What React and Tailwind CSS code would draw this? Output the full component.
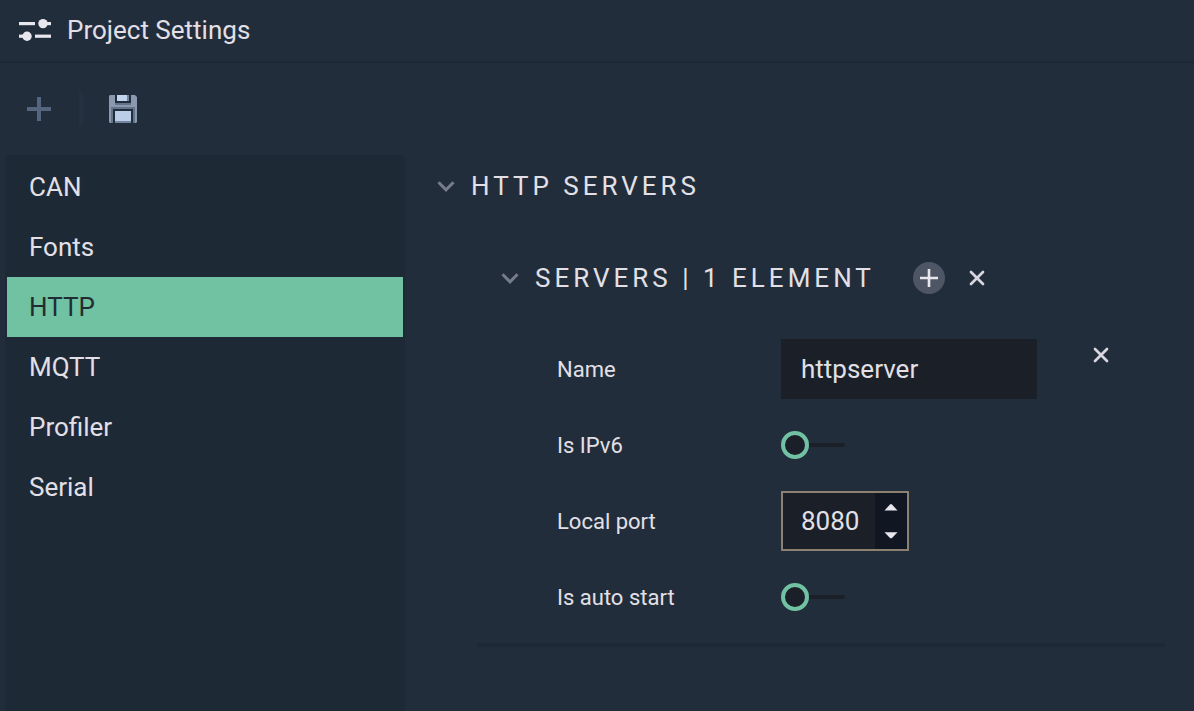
import { useState } from "react";

const SECTIONS = ["CAN", "Fonts", "HTTP", "MQTT", "Profiler", "Serial"];

function SlidersIcon() {
  return (
    <svg width="32" height="24" viewBox="0 0 32 24" fill="#e9e7ee" aria-hidden="true">
      <rect x="0" y="4" width="16" height="3.2" />
      <rect x="26" y="4" width="6" height="3.2" />
      <circle cx="24" cy="5.6" r="4.7" />
      <rect x="0" y="16.6" width="6" height="3.2" />
      <rect x="16" y="16.6" width="16" height="3.2" />
      <circle cx="8" cy="18.2" r="4.7" />
    </svg>
  );
}

function PlusIcon() {
  return (
    <svg width="24" height="24" viewBox="0 0 24 24" fill="#56657f" aria-hidden="true">
      <path d="M10 0h4v10h10v4H14v10h-4V14H0v-4h10z" />
    </svg>
  );
}

function SaveIcon() {
  return (
    <svg width="28" height="28" viewBox="0 0 28 28" aria-hidden="true">
      <path d="M1 0h25l2 2v25l-1 1H1l-1-1V1z" fill="#8b99ae" />
      <path d="M6 0h16v8H6z" fill="#222d3c" />
      <path d="M6 8h16v2H6z" fill="#65738a" />
      <path d="M8 0h10v6H8z" fill="#c3d4ee" />
      <path d="M18 0h2v6h-2z" fill="#7485a0" />
      <path d="M2 12h24v2H2zM2 14h2v14H2zM24 14h2v14h-2z" fill="#65738a" />
      <path d="M4 14h20v14H4z" fill="#222d3c" />
      <path d="M6 16h16v10H6z" fill="#bccde8" />
      <path d="M6 26h16v2H6z" fill="#7485a0" />
    </svg>
  );
}

function ChevronIcon() {
  return (
    <svg width="18" height="12" viewBox="0 0 18 12" fill="none" aria-hidden="true">
      <path d="M1.5 2.2L9 9.8l7.5-7.6" stroke="#868b98" strokeOpacity=".85" strokeWidth="3" />
    </svg>
  );
}

function CrossIcon() {
  return (
    <svg width="16" height="16" viewBox="0 0 16 16" fill="none" aria-hidden="true">
      <path d="M2 2l12 12M14 2L2 14" stroke="#d8d6de" strokeWidth="2.7" strokeLinecap="round" />
    </svg>
  );
}

function Toggle({ id }) {
  const [on, setOn] = useState(false);
  return (
    <span className="relative flex h-7 w-16 items-center">
      <input
        id={id}
        type="checkbox"
        role="switch"
        checked={on}
        onChange={(e) => setOn(e.target.checked)}
        className="peer absolute inset-0 cursor-pointer opacity-0"
      />
      <span className="pointer-events-none size-7 shrink-0 rounded-full border-4 border-[#71c1a3] bg-[#1a1f28] peer-checked:order-2" />
      <span className="pointer-events-none h-1 grow rounded-r-sm bg-[#1a1f28]" />
    </span>
  );
}

function Field({ id, label, children }) {
  return (
    <div className="flex h-15 items-center">
      <label htmlFor={id} className="w-56 shrink-0 pt-0.5 text-[22px]">
        {label}
      </label>
      {children}
    </div>
  );
}

export default function App() {
  const [active, setActive] = useState("HTTP");
  const [name, setName] = useState("httpserver");
  const [port, setPort] = useState(8080);

  return (
    <div className="flex min-h-screen flex-col bg-[#222d3c] font-[Roboto,sans-serif] text-[26px] leading-8 text-[#e2e0e6]">
      <header className="flex items-center gap-4 border-b-2 border-[#1e2835] px-[19px] pt-3.5 pb-[15px]">
        <SlidersIcon />
        <h1>Project Settings</h1>
      </header>

      <div className="flex items-center px-[27px] py-[30px]" role="toolbar" aria-label="Settings actions">
        <button type="button" aria-label="Add">
          <PlusIcon />
        </button>
        <span className="mr-[26px] ml-7 h-8 w-1 bg-[#253041]" />
        <button type="button" aria-label="Save">
          <SaveIcon />
        </button>
      </div>

      <div className="flex grow">
        <nav className="ml-[5px] w-100 shrink-0 rounded-t bg-[#1e2936] p-0.5">
          <ul>
            {SECTIONS.map((s) => (
              <li key={s}>
                <button
                  type="button"
                  onClick={() => setActive(s)}
                  className={
                    s === active
                      ? "block h-15 w-full bg-[#71c1a3] px-[22px] text-left text-[#222c30]"
                      : "block h-15 w-full px-[22px] text-left"
                  }
                >
                  {s}
                </button>
              </li>
            ))}
          </ul>
        </nav>

        <main className="grow pt-[15px] pr-[29px] pl-8">
          <h2 className="flex items-center gap-4 tracking-[4px]">
            <button type="button" aria-label="Collapse HTTP servers">
              <ChevronIcon />
            </button>
            HTTP SERVERS
          </h2>

          <div className="mt-15 flex items-center pl-16">
            <h3 className="flex items-center gap-4 tracking-[4px]">
              <button type="button" aria-label="Collapse servers">
                <ChevronIcon />
              </button>
              SERVERS | 1 ELEMENT
            </h3>
            <button
              type="button"
              aria-label="Add server"
              className="ml-[38px] flex size-8 items-center justify-center rounded-full bg-[#4e5665]"
            >
              <svg width="20" height="20" viewBox="0 0 20 20" aria-hidden="true">
                <path d="M10 1v18M1 10h18" stroke="#e9e7ee" strokeWidth="2.6" />
              </svg>
            </button>
            <button type="button" aria-label="Remove all servers" className="ml-6">
              <CrossIcon />
            </button>
          </div>

          <section className="mt-[45px] ml-10 border-b-4 border-[#1e2936] pb-4 pl-20">
            <div className="flex items-start gap-14">
              <div className="flex flex-col gap-4">
                <Field id="name" label="Name">
                  <input
                    id="name"
                    type="text"
                    value={name}
                    onChange={(e) => setName(e.target.value)}
                    className="h-15 w-64 bg-[#1a1f28] px-5 outline-none"
                  />
                </Field>
                <Field id="ipv6" label="Is IPv6">
                  <Toggle id="ipv6" />
                </Field>
                <Field id="port" label="Local port">
                  <div className="flex h-15 w-32 border-2 border-[#8c8071] bg-[#1a1f28]">
                    <input
                      id="port"
                      type="text"
                      inputMode="numeric"
                      value={port}
                      onChange={(e) => setPort(Number(e.target.value) || 0)}
                      className="w-0 grow pl-[18px] outline-none"
                    />
                    <div className="flex w-8 flex-col bg-[#111623]">
                      <button
                        type="button"
                        aria-label="Increase port"
                        onClick={() => setPort(port + 1)}
                        className="flex flex-1 items-center justify-center"
                      >
                        <svg width="14" height="8" viewBox="0 0 14 8" fill="#e9e7ee" aria-hidden="true">
                          <path d="M6 1.5q1-.8 2 0L13.5 7.5H.5z" />
                        </svg>
                      </button>
                      <button
                        type="button"
                        aria-label="Decrease port"
                        onClick={() => setPort(port - 1)}
                        className="flex flex-1 items-center justify-center"
                      >
                        <svg width="14" height="8" viewBox="0 0 14 8" fill="#e9e7ee" aria-hidden="true">
                          <path d="M6 6.9q1 .8 2 0L13.5 1.2H.5z" />
                        </svg>
                      </button>
                    </div>
                  </div>
                </Field>
                <Field id="autostart" label="Is auto start">
                  <Toggle id="autostart" />
                </Field>
              </div>
              <button type="button" aria-label="Remove server" className="mt-2">
                <CrossIcon />
              </button>
            </div>
          </section>
        </main>
      </div>
    </div>
  );
}
